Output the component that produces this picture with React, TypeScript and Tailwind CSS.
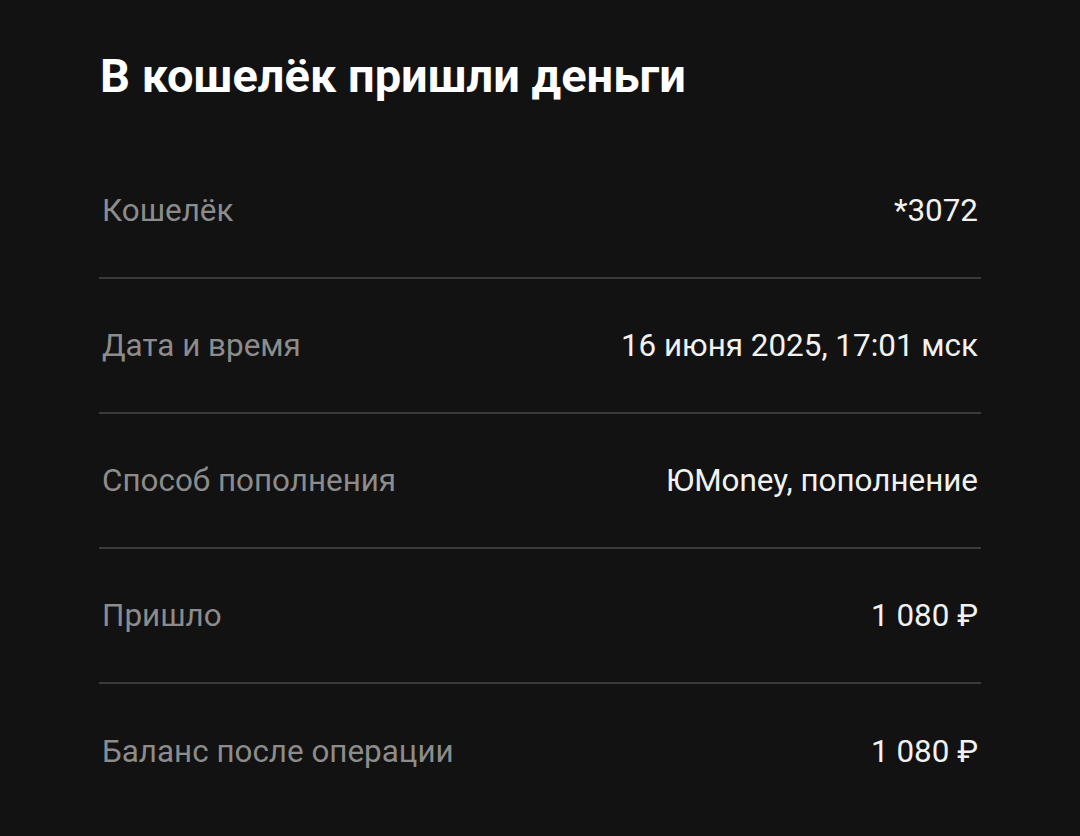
import React from "react";

const rows: { label: string; value: string }[] = [
  { label: "Кошелёк", value: "*3072" },
  { label: "Дата и время", value: "16 июня 2025, 17:01 мск" },
  { label: "Способ пополнения", value: "ЮMoney, пополнение" },
  { label: "Пришло", value: "1 080 ₽" },
  { label: "Баланс после операции", value: "1 080 ₽" },
];

export default function App() {
  return (
    <div className="min-h-[836px] w-full bg-[#121212] px-[99px] pt-[48px] font-['Roboto',sans-serif]">
      <h1 className="text-[47px] font-bold leading-[56px] text-white pl-px">
        В кошелёк пришли деньги
      </h1>

      <div className="mt-[40px]">
        {rows.map((row, i) => (
          <div
            key={row.label}
            className={`flex h-[135px] items-center justify-between px-[3px] ${
              i < rows.length - 1 ? "border-b-2 border-[#3a3a3a]" : ""
            }`}
          >
            <span className="text-[31.4px] text-[#8c8c8c]">{row.label}</span>
            <span className="text-[31.4px] text-[#f2f2f2]">{row.value}</span>
          </div>
        ))}
      </div>
    </div>
  );
}
